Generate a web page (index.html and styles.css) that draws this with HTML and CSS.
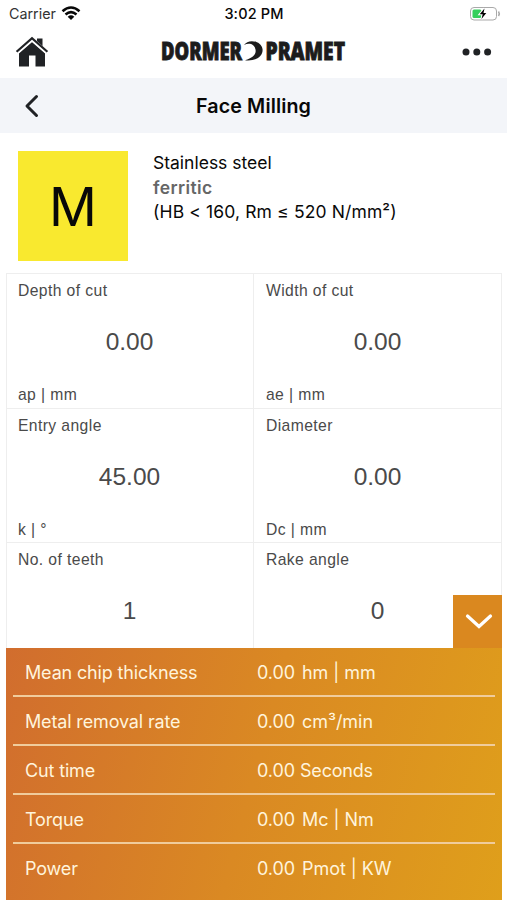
FILE: index.html
```html
<!DOCTYPE html>
<html lang="en">
<head>
<meta charset="utf-8">
<title>Face Milling</title>
<link rel="stylesheet" href="styles.css">
</head>
<body>
<div class="app">
  <div class="status">
    <div class="carrier"><span>Carrier</span>
      <svg width="20" height="16" viewBox="0 0 20 16"><g fill="none" stroke="#080808" stroke-width="2.5"><path d="M1.500 5.300Q10-2.300 18.500 5.300"/><path d="M4.500 8.500Q10 3.700 15.500 8.500"/></g><path d="M10 14.100L6.700 10.700Q10 7.900 13.300 10.700Z" fill="#080808"/></svg>
    </div>
    <time class="clock">3:02 PM</time>
    <svg class="battery" width="32" height="16" viewBox="0 0 32 16"><rect x="1.500" y="1.500" width="26" height="12.500" rx="3.500" fill="#fff" stroke="#a9a9a9"/><rect x="3.500" y="3.500" width="9" height="8.500" rx="1.500" fill="#35cf5c"/><path d="M29.500 5.500Q31 7.700 29.500 10" fill="none" stroke="#a9a9a9" stroke-width="1.500"/><path d="M15.500 2.500L10.700 8.300H13.700L12.500 13L17.300 7H14.500Z" fill="#000" stroke="#fff" stroke-width="2" paint-order="stroke"/></svg>
  </div>
  <header class="header">
    <svg class="home" width="34" height="32" viewBox="0 0 34 32"><path d="M22 2.500H27.500V12L22 7Z" fill="#202225"/><path d="M17 5.500L30 17V30.500H20.500V19.500H14V30.500H4V17Z" fill="#202225"/><path d="M2 16.500L17 3.500L32 16.500" fill="none" stroke="#fff" stroke-width="4"/><path d="M1.600 15.800L17 2.200L32.400 15.800" fill="none" stroke="#202225" stroke-width="2.200"/></svg>
    <svg class="logo" width="190" height="36" viewBox="0 0 190 36" role="img"><g class="logo-text"><text x="3" y="25.500" textLength="81" lengthAdjust="spacingAndGlyphs">DORMER</text><text x="107.500" y="25.500" textLength="79.500" lengthAdjust="spacingAndGlyphs">PRAMET</text></g><path d="M86 11C90 4.500 103 6.500 104.500 15C105.500 22 98 27.500 87 26.200C94.500 24 98.500 20.500 97.500 15.500C96.500 10 91 8.500 86 11Z" fill="#1c1c1c"/></svg>
    <svg class="more" width="30" height="8" viewBox="0 0 30 8" fill="#202225"><circle cx="4" cy="4" r="3.500"/><circle cx="14.800" cy="4" r="3.500"/><circle cx="25.600" cy="4" r="3.500"/></svg>
  </header>
  <div class="titlebar">
    <svg class="back" width="18" height="26" viewBox="0 0 18 26"><path d="M13.500 3.500L4 13L13.500 22.500" fill="none" stroke="#202225" stroke-width="3" stroke-linecap="round" stroke-linejoin="round"/></svg>
    <h1>Face Milling</h1>
  </div>
  <section class="material">
    <div class="swatch">M</div>
    <div class="description"><div>Stainless steel</div><div class="grade">ferritic</div><div class="spec">(HB &lt; 160, Rm ≤ 520 N/mm²)</div></div>
  </section>
  <main class="grid">
    <div class="cell"><label>Depth of cut</label><b>0.00</b><small>ap | mm</small></div>
    <div class="cell"><label>Width of cut</label><b>0.00</b><small>ae | mm</small></div>
    <div class="cell"><label>Entry angle</label><b>45.00</b><small>k | °</small></div>
    <div class="cell"><label>Diameter</label><b>0.00</b><small>Dc | mm</small></div>
    <div class="cell"><label>No. of teeth</label><b>1</b></div>
    <div class="cell"><label>Rake angle</label><b>0</b></div>
    <div class="toggle"><svg width="30" height="18" viewBox="0 0 30 18"><path d="M4.500 3L16 13.500L27.500 3" fill="none" stroke="#fff" stroke-width="3.200" stroke-linecap="round"/></svg></div>
  </main>
  <section class="results">
    <div class="row"><span class="name">Mean chip thickness</span><span>0.00</span><span>hm | mm</span></div>
    <div class="row"><span class="name">Metal removal rate</span><span>0.00</span><span>cm³/min</span></div>
    <div class="row"><span class="name">Cut time</span><span>0.00</span><span class="near">Seconds</span></div>
    <div class="row"><span class="name">Torque</span><span>0.00</span><span>Mc | Nm</span></div>
    <div class="row"><span class="name">Power</span><span>0.00</span><span>Pmot | KW</span></div>
  </section>
</div>
</body>
</html>
```
FILE: styles.css
```css
* { box-sizing: border-box; }
body { margin: 0; background: #fff; color: #080808; font-family: Inter, "Liberation Sans", sans-serif; }
.app { width: 507px; height: 900px; overflow: hidden; display: flex; flex-direction: column; }
.status { height: 27px; flex: none; display: grid; grid-template-columns: 1fr auto 1fr; align-items: center; padding: 0 6px 0 9px; }
.carrier { display: flex; align-items: center; gap: 5px; font-size: 14.300px; color: #333; }
.clock { font-weight: 500; font-size: 14.500px; letter-spacing: .15px; margin-left: -2px; }
.battery { justify-self: end; }
.header { height: 51px; flex: none; display: flex; align-items: center; justify-content: space-between; padding: 0 15px 2px 15px; }
.logo { margin-right: 6px; }
.logo-text { font: 800 24px "Open Sans", sans-serif; fill: #1c1c1c; stroke: #1c1c1c; stroke-width: .9px; }
.titlebar { height: 55px; flex: none; display: grid; grid-template-columns: 40px 1fr 40px; align-items: center; background: #f3f5f9; padding: 1px 23px 0; }
h1 { margin: 0; text-align: center; font-size: 19.700px; font-weight: 600; letter-spacing: .1px; }
.material { height: 140px; flex: none; display: flex; padding: 18px; gap: 25px; }
.swatch { width: 110px; height: 110px; background: #f9e92f; display: flex; align-items: center; justify-content: center; font-size: 53px; padding-top: 2px; }
.description { font-size: 17.500px; line-height: 24.500px; }
.grade { font-weight: 600; color: #666; letter-spacing: .4px; }
.spec { letter-spacing: .13px; }
.grid { height: 375px; flex: none; width: 496px; margin-left: 6px; position: relative; display: grid; grid-template-columns: 247px 248px; grid-template-rows: 134.5px 134.5px 106px; border-left: 1px solid #eee; }
.cell { border-top: 1px solid #eee; border-right: 1px solid #eee; padding: 7px 12px 1px 11px; display: grid; grid-template-rows: 20px 82px 23px; align-items: center; color: #4a4a4a; font-family: "Liberation Sans", sans-serif; }
.cell:nth-child(even) { padding-left: 12px; }
.cell label, .cell small { font-size: 15.700px; letter-spacing: .4px; }
.cell small { padding-top: 1px; }
.cell b { font: 400 24.500px "Liberation Sans", sans-serif; text-align: center; }
.toggle { position: absolute; right: 0; bottom: 0; width: 49px; height: 53px; background: #da881f; display: flex; align-items: center; justify-content: center; }
.results { flex: 1; width: 496px; margin-left: 6px; padding: 0 7px; background: linear-gradient(105deg, #d16d2e, #da8923 50%, #df9f1b); color: #fff4dc; }
.row { height: 48.900px; display: grid; grid-template-columns: 232px 45px 1fr; align-items: center; padding: 3px 0 0 12px; border-bottom: 2px solid #f0cc9c; font-size: 18px; letter-spacing: -.05px; }
.row:last-child { border: 0; padding-top: 1px; }
.name { letter-spacing: -.15px; }
.near { margin-left: -2px; letter-spacing: -.2px; }
```
